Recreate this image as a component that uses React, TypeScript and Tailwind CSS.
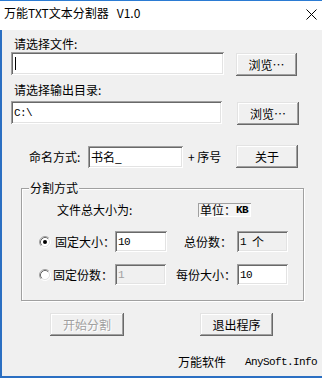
import React from 'react';

// classic Win32 3D edges
const sunken =
  'shadow-[inset_1px_1px_0_#a0a0a0,inset_-1px_-1px_0_#ffffff,inset_2px_2px_0_#696969,inset_-2px_-2px_0_#e3e3e3]';
const raised =
  'shadow-[inset_-1px_-1px_0_#696969,inset_1px_1px_0_#e3e3e3,inset_-2px_-2px_0_#a0a0a0,inset_2px_2px_0_#ffffff]';

const ui = "font-['Noto_Sans_CJK_SC','Liberation_Sans',sans-serif]";
const mono = "font-['Liberation_Mono','Noto_Sans_CJK_SC',monospace] text-[11px] tracking-[-0.6px]";

type FieldProps = {
  className?: string;
  gray?: boolean;
  children?: React.ReactNode;
};

const Field: React.FC<FieldProps> = ({ className = '', gray = false, children }) => (
  <div
    className={`${sunken} ${gray ? 'bg-[#f0f0f0]' : 'bg-white'} flex items-center pl-[3px] shrink-0 ${className}`}
  >
    {children}
  </div>
);

type BtnProps = {
  className?: string;
  disabled?: boolean;
  children: React.ReactNode;
};

const Btn: React.FC<BtnProps> = ({ className = '', disabled = false, children }) => (
  <div
    className={`${raised} bg-[#f0f0f0] flex items-center justify-center shrink-0 text-[12px] leading-[16px] ${
      disabled ? 'text-[#a0a0a0] [text-shadow:1px_1px_0_#ffffff]' : 'text-black'
    } ${className}`}
  >
    {children}
  </div>
);

const Radio: React.FC<{ checked?: boolean }> = ({ checked = false }) => (
  <svg width="12" height="12" viewBox="0 0 12 12" className="shrink-0">
    <circle cx="6" cy="6" r="4.2" fill="#ffffff" />
    <path d="M2.11 9.89 A5.5 5.5 0 0 1 9.89 2.11" fill="none" stroke="#a0a0a0" strokeWidth="1" />
    <path d="M9.89 2.11 A5.5 5.5 0 0 1 2.11 9.89" fill="none" stroke="#ffffff" strokeWidth="1" />
    <path d="M2.82 9.18 A4.5 4.5 0 0 1 9.18 2.82" fill="none" stroke="#696969" strokeWidth="1" />
    <path d="M9.18 2.82 A4.5 4.5 0 0 1 2.82 9.18" fill="none" stroke="#e3e3e3" strokeWidth="1" />
    {checked && <circle cx="6" cy="6" r="2" fill="#000000" />}
  </svg>
);

const App: React.FC = () => {
  return (
    <div
      className={`w-[322px] h-[378px] overflow-hidden flex flex-col bg-[#f0f0f0] text-black whitespace-nowrap ${ui}`}
    >
      {/* title bar */}
      <div className="h-[30px] shrink-0 bg-white border-t border-[#2b7bd3] flex items-start justify-between pl-[4px] pr-[5px]">
        <span className="mt-[4px] text-[12px] leading-[16px] whitespace-pre">万能TXT文本分割器   V1.0</span>
        <svg width="11" height="11" viewBox="0 0 11 11" className="mt-[8px]">
          <path d="M0.5 0.5 L10.5 10.5 M10.5 0.5 L0.5 10.5" stroke="#000000" strokeWidth="1" />
        </svg>
      </div>

      {/* client area */}
      <div className="flex-1 flex flex-col border-l-2 border-b-2 border-[#2b6fc2] text-[12px] leading-[16px]">
        <div className="mt-[6px] ml-[12px] h-[16px]">请选择文件:</div>
        <div className="flex items-start">
          <Field className="ml-[9px] w-[213px] h-[23px]">
            <div className="ml-[1px] w-[1px] h-[13px] bg-black" />
          </Field>
          <Btn className="ml-[12px] mt-[1px] w-[61px] h-[23px]">浏览…</Btn>
        </div>

        <div className="mt-[6px] ml-[12px] h-[16px]">请选择输出目录:</div>
        <div className="mt-[3px] flex items-start">
          <Field className="ml-[9px] w-[211px] h-[23px]">
            <span className={mono}>C:\</span>
          </Field>
          <Btn className="ml-[15px] mt-[1px] w-[62px] h-[23px]">浏览…</Btn>
        </div>

        <div className="mt-[20px] flex items-center h-[23px]">
          <span className="ml-[27px] w-[59px] shrink-0">命名方式:</span>
          <Field className="w-[95px] h-[22px]">
            <span>书名_</span>
          </Field>
          <span className="ml-[5px] w-[48px] shrink-0 whitespace-pre">+ 序号</span>
          <Btn className="w-[62px] h-[23px]">关于</Btn>
        </div>

        {/* group box */}
        <div className="relative mt-[20px] ml-[19px] w-[283px] h-[113px] shrink-0 border border-[#a0a0a0] shadow-[inset_1px_1px_0_#ffffff,1px_1px_0_#ffffff]">
          <span className="absolute left-[7px] top-[-9px] px-[1px] bg-[#f0f0f0] leading-[16px]">分割方式</span>

          <div className="mt-[13px] flex items-center h-[16px]">
            <span className="ml-[35px] w-[141px] shrink-0">文件总大小为:</span>
            <div className="w-[53px] h-[14px] flex items-center pl-[2px] bg-[#f4f4f4] shadow-[inset_1px_1px_0_#a0a0a0,inset_-1px_-1px_0_#ffffff]">
              <span>单位：</span>
              <span className={`${mono} font-bold`}>KB</span>
            </div>
          </div>

          <div className="mt-[13px] flex items-center h-[21px]">
            <span className="ml-[17px]">
              <Radio checked />
            </span>
            <span className="ml-[4px] w-[60px] shrink-0">固定大小：</span>
            <Field className="w-[52px] h-[21px]">
              <span className={mono}>10</span>
            </Field>
            <span className="ml-[17px] w-[53px] shrink-0">总份数：</span>
            <Field gray className="w-[51px] h-[21px]">
              <span className={mono}>1</span>
              <span className="ml-[6px]">个</span>
            </Field>
          </div>

          <div className="mt-[12px] flex items-center h-[21px]">
            <span className="ml-[17px]">
              <Radio />
            </span>
            <span className="ml-[2px] w-[62px] shrink-0">固定份数：</span>
            <Field gray className="w-[51px] h-[21px]">
              <span className={`${mono} text-[#a0a0a0]`}>1</span>
            </Field>
            <span className="ml-[10px] w-[61px] shrink-0">每份大小：</span>
            <Field className="w-[51px] h-[21px]">
              <span className={mono}>10</span>
            </Field>
          </div>
        </div>

        <div className="mt-[12px] flex items-center">
          <Btn disabled className="ml-[48px] w-[74px] h-[23px]">开始分割</Btn>
          <Btn className="ml-[76px] w-[73px] h-[23px]">退出程序</Btn>
        </div>

        <div className="mt-[18px] flex items-center h-[16px]">
          <span className="ml-[176px] w-[67px] shrink-0">万能软件</span>
          <span className={mono}>AnySoft.Info</span>
        </div>
      </div>
    </div>
  );
};

export default App;
